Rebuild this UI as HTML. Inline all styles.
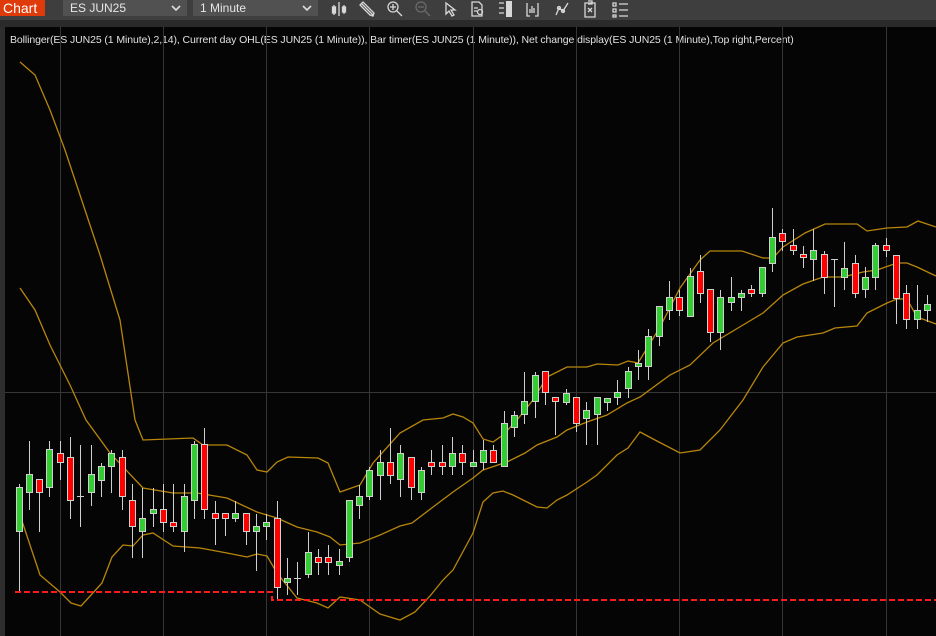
<!DOCTYPE html>
<html><head><meta charset="utf-8"><style>
*{margin:0;padding:0;box-sizing:border-box}
body{width:936px;height:636px;background:#050505;overflow:hidden;font-family:"Liberation Sans",sans-serif;position:relative}
#tb{position:absolute;left:0;top:0;width:936px;height:20px;background:#3e3e3e}
#tb2{position:absolute;left:0;top:20px;width:936px;height:7px;background:#2a2a2a}
#chartlbl{position:absolute;left:0;top:0;width:45px;height:16px;background:#de3a0a;color:#fff;font-size:14px;line-height:16px;padding-left:3px}
.dd{position:absolute;top:0;height:16px;background:#515151;color:#e6e6e6;font-size:12px;line-height:16px;padding-left:7px}
svg{position:absolute;left:0;top:0}
.dd svg{left:auto;right:6px;top:5px}
#legend{position:absolute;left:10px;top:34px;color:#e0e0e0;font-size:10.5px;white-space:nowrap;letter-spacing:-0.1px}
#lb{position:absolute;left:0;top:27px;width:5px;height:609px;background:#2e2e2e}
</style></head><body>
<div id="tb"></div><div id="tb2"></div>
<div id="chartlbl">Chart</div>
<div class="dd" style="left:63px;width:124px">ES JUN25<svg width="10" height="7"><path d="M1 1l4 4 4-4" stroke="#ddd" stroke-width="1.6" fill="none"/></svg></div>
<div class="dd" style="left:193px;width:125px">1 Minute<svg width="10" height="7"><path d="M1 1l4 4 4-4" stroke="#ddd" stroke-width="1.6" fill="none"/></svg></div>
<svg width="936" height="20" style="z-index:2" fill="none" stroke="#d8d8d8" stroke-width="1.3">
<g><line x1="334" y1="5" x2="334" y2="15"/><line x1="339" y1="2" x2="339" y2="16"/><line x1="344" y1="5" x2="344" y2="14"/><rect x="332.5" y="7" width="3" height="6" fill="#d8d8d8"/><rect x="342.5" y="7" width="3" height="5" fill="#d8d8d8"/></g>
<path d="M361 3l12 12M360 5l3-3 11 11-1 3-3-1z"/>
<circle cx="393" cy="7" r="5"/><path d="M397 11l5 5M390 7h6M393 4v6"/>
<g stroke="#6a6a6a"><circle cx="421" cy="7" r="5"/><path d="M425 11l5 5M418 7h6"/></g>
<path d="M446 3v11l3-3 3 5 2-1-3-5h4z"/>
<path d="M472 2h7l3 3v11h-10zM474 8h4M474 11h3"/><circle cx="480" cy="12" r="2.5"/>
<rect x="506" y="1" width="6" height="16" fill="#d8d8d8" stroke="none"/><path d="M499 3h5M499 8h5M499 13h5"/>
<path d="M527 3v13h3M538 3v13h-3M530 13v-4M532 13v-7M534 13v-5"/>
<path d="M556 15l3-7 4 3 5-8"/><circle cx="559" cy="8" r="1.5"/><circle cx="563" cy="11" r="1.5"/>
<path d="M585 3h10v14h-10zM588 1h4v3h-4M588 8l4 4M592 8l-4 4"/>
<path d="M613 3h3v3h-3zM613 9h3v3h-3zM613 15h3v2h-3zM619 4h9M619 10h9M619 16h9"/>
</svg>
<div id="lb"></div>
<div id="legend">Bollinger(ES JUN25 (1 Minute),2,14), Current day OHL(ES JUN25 (1 Minute)), Bar timer(ES JUN25 (1 Minute)), Net change display(ES JUN25 (1 Minute),Top right,Percent)</div>
<svg id="ch" width="936" height="636"></svg>
<script>
var s='';
[60,163,266,369,473,576,679,782,886].forEach(function(x){s+='<line x1="'+(x+.5)+'" y1="27" x2="'+(x+.5)+'" y2="636" stroke="#363636"/>';});
s+='<line x1="5" y1="392.5" x2="936" y2="392.5" stroke="#363636"/>';
function pl(p){return '<polyline fill="none" stroke="#b8860b" stroke-width="1.3" points="'+p+'"/>';}
s+=pl("20,62 35,75 50,110 65,150 80,195 100,255 120,320 135,420 143,440 193,438 203,445 227,445 247,455 257,470 267,472 277,462 288,457 318,458 328,463 340,492 360,485 373,463 400,433 423,420 443,418 453,414 463,417 473,423 483,439 493,442 503,435 517,420 533,400 547,377 567,367 587,367 597,364 618,365 628,361 638,363 660,327 680,288 700,260 710,251 742,251 763,258 773,258 783,247 805,233 825,224 857,224 867,231 887,228 907,227 918,221 936,227");
s+=pl("20,288 35,310 50,345 70,385 86,420 110,453 143,488 173,493 197,493 227,498 257,512 277,518 297,527 317,532 330,537 340,545 360,543 380,535 400,526 412,523 433,507 453,492 473,478 483,470 507,462 525,453 537,445 557,437 567,430 587,422 607,415 627,403 640,397 670,375 690,365 713,343 763,313 783,295 803,284 823,277 843,277 863,272 877,270 897,263 907,263 917,267 936,276");
s+=pl("20,515 40,575 60,592 71,603 81,606 102,583 112,557 123,545 133,546 143,535 153,533 173,546 200,548 227,553 247,557 257,554 267,556 277,573 297,598 317,603 328,608 340,597 360,600 380,614 400,620 415,612 430,596 443,580 453,570 473,533 483,502 493,493 503,491 513,495 537,507 547,508 557,500 567,495 587,482 597,475 617,455 628,448 640,432 655,440 680,453 700,450 720,430 743,400 763,367 783,343 797,337 823,333 835,328 857,326 867,313 887,303 897,299 907,299 917,317 936,324");
var d=[[19,487,531,484,592,'g'],[29,474,492,441,510,'g'],[39,479,492,479,532,'r'],[49,449,487,441,497,'g'],[60,453,462,441,480,'r'],[70,457,500,437,519,'r'],[80,496,496,445,527,'d'],[91,474,492,445,506,'g'],[101,466,480,463,497,'g'],[111,453,466,450,493,'g'],[122,457,496,450,510,'r'],[132,500,526,484,558,'r'],[142,518,531,488,558,'g'],[153,509,513,488,527,'g'],[163,509,522,484,532,'r'],[173,522,526,484,532,'r'],[184,496,531,484,552,'g'],[194,444,500,441,519,'g'],[204,444,509,428,519,'r'],[215,513,518,501,545,'r'],[225,513,518,513,536,'r'],[235,513,518,501,522,'g'],[246,513,531,513,545,'r'],[256,526,531,514,571,'g'],[266,522,526,514,540,'g'],[277,518,587,501,600,'r'],[287,578,582,558,595,'g'],[297,578,578,562,595,'d'],[308,552,574,532,578,'g'],[318,557,562,549,575,'r'],[328,557,562,545,575,'r'],[339,561,565,549,575,'g'],
[349,500,557,500,562,'g'],[359,496,505,485,519,'g'],[369,470,496,467,500,'g'],[380,462,475,450,500,'g'],[390,462,475,428,484,'r'],[400,453,479,445,497,'g'],[411,457,487,457,500,'r'],[421,470,492,467,500,'g'],[431,462,466,450,475,'r'],[442,462,466,445,475,'r'],[452,453,466,437,475,'g'],[462,453,462,445,475,'r'],[473,462,466,450,466,'g'],[483,450,462,440,470,'g'],[493,450,462,445,462,'r'],[504,423,466,411,466,'g'],[514,415,427,411,437,'g'],[524,401,414,372,424,'g'],[535,375,401,372,418,'g'],[545,371,392,371,405,'r'],[555,397,401,397,435,'r'],[566,393,402,389,405,'g'],[576,397,423,397,432,'r'],[586,410,418,402,445,'g'],[597,397,414,397,445,'g'],[607,398,402,398,411,'g'],[617,392,397,380,405,'g'],[628,371,388,367,398,'g'],
[638,363,366,350,380,'g'],[648,336,366,329,380,'g'],[659,306,336,306,346,'g'],[669,297,310,281,320,'g'],[679,297,310,290,316,'r'],[690,276,316,268,316,'g'],[700,271,293,255,303,'r'],[710,289,332,289,342,'r'],[720,297,332,290,350,'g'],[731,297,302,277,311,'g'],[741,293,297,290,311,'g'],[751,289,293,285,297,'r'],[762,267,293,267,297,'g'],[772,237,263,208,272,'g'],[782,233,241,229,251,'r'],[793,245,250,229,255,'r'],[803,254,257,246,268,'r'],[813,250,259,229,281,'g'],[824,254,277,251,294,'r'],[834,259,259,259,307,'d'],[844,268,277,242,290,'g'],[855,263,293,255,298,'r'],[865,277,289,267,298,'g'],[875,245,277,243,290,'g'],[886,245,250,238,257,'r'],[896,255,298,255,324,'r'],[906,293,319,285,329,'r'],[917,310,319,285,329,'g'],[927,304,310,295,322,'g']];
d.forEach(function(c){var x=c[0];
s+='<line x1="'+(x+.5)+'" y1="'+c[3]+'" x2="'+(x+.5)+'" y2="'+c[4]+'" stroke="#cfcfcf"/>';
if(c[5]=='d'){s+='<line x1="'+(x-3)+'" y1="'+(c[1]+.5)+'" x2="'+(x+4)+'" y2="'+(c[1]+.5)+'" stroke="#cfcfcf"/>';}
else{var h=Math.max(c[2]-c[1],3);s+='<rect x="'+(x-2.5)+'" y="'+(c[1]+.5)+'" width="6" height="'+h+'" fill="'+(c[5]=='g'?'#33cc33':'#ff0000')+'" stroke="#d0d0d0"/>';}
});
s+='<polyline fill="none" stroke="#ff1a1a" stroke-width="2" stroke-dasharray="6,3" points="15,592 272,592 272,600 936,600"/>';
document.getElementById('ch').innerHTML=s;
</script>
</body></html>
